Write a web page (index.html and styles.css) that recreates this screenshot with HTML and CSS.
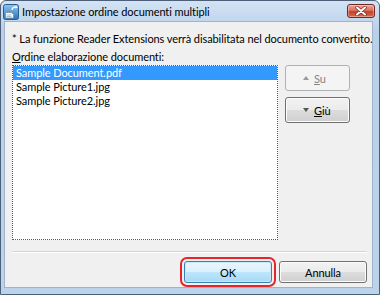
FILE: index.html
```html
<!DOCTYPE html>
<html>
<head>
    <title>Impostazione ordine documenti multipli</title>
    <link rel="stylesheet" href="styles.css">
</head>
<body>
    <div class="window">
        <div class="titlebar">
            <svg class="app-icon" width="16" height="16" viewBox="0 0 16 16">
                <defs>
                    <linearGradient id="ig" x1="0" y1="0" x2="0" y2="1">
                        <stop offset="0" stop-color="#8cc6f0"/>
                        <stop offset="1" stop-color="#2a73bd"/>
                    </linearGradient>
                </defs>
                <rect x="0.5" y="0.5" width="15" height="15" rx="2" fill="url(#ig)" stroke="#2d5d8c"/>
                <path d="M2.5 8.5 h6 l2 2 v3.5 h-8 z" fill="#fff" stroke="#7a8a99" stroke-width="0.8"/>
                <path d="M3.5 11 h5 M3.5 12.5 h5" stroke="#9aa7b3" stroke-width="0.8"/>
                <path d="M9 6 a3.2 3.2 0 0 1 5 -2.5" fill="none" stroke="#fff" stroke-width="1.4"/>
                <path d="M12.6 1.8 l2.2 1.6 l-2.4 1.2 z" fill="#fff"/>
            </svg>
            <span class="title">Impostazione ordine documenti multipli</span>
            <button class="close">
                <svg width="12" height="10" viewBox="0 0 12 10">
                    <path d="M2 1.5 L10 8.5 M10 1.5 L2 8.5" stroke="#7b2b22" stroke-width="3.4" stroke-linecap="round"/>
                    <path d="M2 1.5 L10 8.5 M10 1.5 L2 8.5" stroke="#fff" stroke-width="2" stroke-linecap="round"/>
                </svg>
            </button>
        </div>

        <div class="client">
            <p class="note">* La funzione Reader Extensions verrà disabilitata nel documento convertito.</p>
            <p class="label"><u>O</u>rdine elaborazione documenti:</p>

            <div class="main">
                <ul class="listbox">
                    <li class="selected">Sample Document.pdf</li>
                    <li>Sample Picture1.jpg</li>
                    <li>Sample Picture2.jpg</li>
                </ul>
                <div class="side">
                    <button class="btn side-btn" disabled><span class="tri up"></span><span><u>S</u>u</span></button>
                    <button class="btn side-btn"><span class="tri down"></span><span><u>G</u>iù</span></button>
                </div>
            </div>

            <div class="sep"></div>

            <div class="footer">
                <button class="btn default">OK</button>
                <button class="btn">Annulla</button>
            </div>
        </div>
    </div>
</body>
</html>
```

FILE: styles.css
```css
body {
    margin: 0;
    font-family: Lato, "Open Sans", sans-serif;
    font-size: 11px;
    letter-spacing: -0.08px;
    color: #000;
    background: #fff;
}
.window {
    width: 380px;
    height: 295px;
    box-sizing: border-box;
    border: 1px solid #4d6078;
    border-radius: 6px 6px 0 0;
    background: linear-gradient(#d3e3f5, #b9d0e9 30px, #bcd3ec);
    padding: 0 6px 6px 3px;
    display: flex;
    flex-direction: column;
}
.titlebar {
    height: 21px;
    display: flex;
    align-items: flex-start;
    margin-left: -1px;
}
.app-icon {
    margin-top: 3px;
    flex: none;
}
.title {
    margin-left: 3px;
    margin-top: 3px;
    line-height: 16px;
    color: #000;
}
.close {
    margin-left: auto;
    margin-right: -2px;
    margin-top: 3px;
    width: 28px;
    height: 14px;
    padding: 0;
    border: 1px solid #6e2a22;
    border-radius: 3px;
    background: linear-gradient(#eba598, #d9735f 45%, #c6402a 55%, #d8684f);
    box-shadow: inset 0 0 0 1px rgba(255, 255, 255, 0.35);
    display: flex;
    align-items: center;
    justify-content: center;
}
.client {
    flex: 1;
    background: #f0f0f0;
    border: 1px solid #9fb4cc;
    padding: 9px 5px 4px 7px;
    display: flex;
    flex-direction: column;
}
.note, .label {
    margin: 0;
    line-height: 15px;
    white-space: nowrap;
}
.label {
    margin-top: 3px;
}
.main {
    margin-top: 1px;
    display: flex;
    gap: 7px;
}
.listbox {
    list-style: none;
    margin: 0;
    padding: 0;
    width: 266px;
    height: 175px;
    box-sizing: border-box;
    background: #fff;
    border: 1px dotted #5a5a5a;
}
.listbox li {
    line-height: 14px;
    padding-left: 3px;
}
.listbox li.selected {
    background: #3399ff;
    color: #fff;
}
.side {
    display: flex;
    flex-direction: column;
    gap: 6px;
}
.btn {
    font-family: inherit;
    font-size: 11px;
    letter-spacing: inherit;
    color: #000;
    border: 1px solid #707070;
    border-radius: 3px;
    background: linear-gradient(#f2f2f2, #ebebeb 50%, #dddddd 50%, #cfcfcf);
    box-shadow: inset 0 0 0 1px #fcfcfc;
    padding: 0;
}
.side-btn {
    width: 65px;
    height: 26px;
    display: flex;
    align-items: center;
    gap: 5px;
    padding-left: 17px;
}
.side-btn:disabled {
    border-color: #adb2b5;
    background: #f4f4f4;
    box-shadow: none;
    color: #838383;
}
.tri {
    width: 0;
    height: 0;
    border-left: 3.5px solid transparent;
    border-right: 3.5px solid transparent;
}
.tri.up {
    border-bottom: 4px solid #9a9a9a;
}
.tri.down {
    border-top: 4px solid #555;
}
.sep {
    margin-top: 11px;
    border-top: 1px solid #d5d5d5;
    border-bottom: 1px solid #fff;
}
.footer {
    margin-top: 8px;
    display: flex;
    justify-content: flex-end;
    gap: 7px;
}
.footer .btn {
    width: 88px;
    height: 22px;
}
.btn.default {
    border-color: #3c7fb1;
    background: linear-gradient(#eaf6fd, #d9f0fc 50%, #bee6fd 50%, #a7d9f5);
    box-shadow: inset 0 0 0 1px #c9e9fb;
    outline: 2px solid #e8242b;
    outline-offset: 2px;
}
```
